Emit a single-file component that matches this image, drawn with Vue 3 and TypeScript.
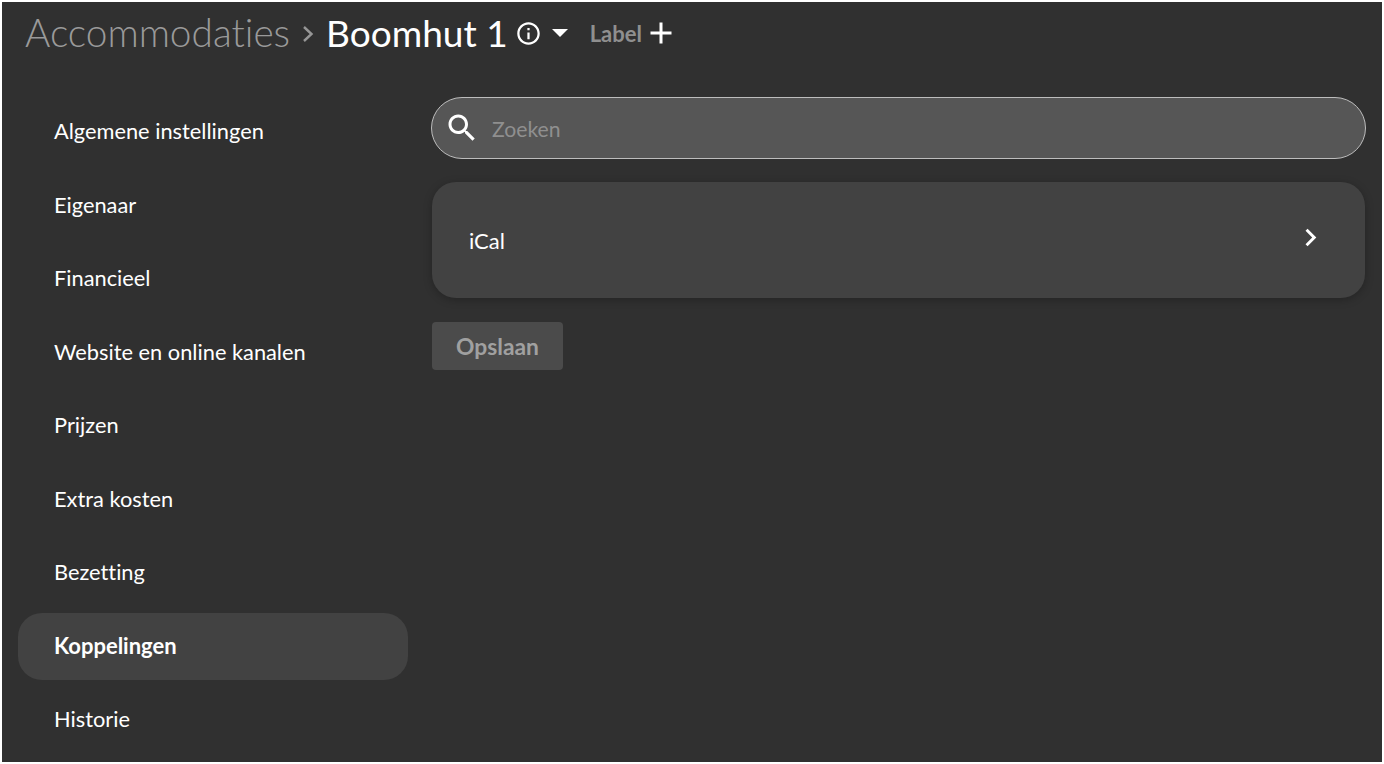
<script setup lang="ts">
const menuItems: string[] = [
  'Algemene instellingen',
  'Eigenaar',
  'Financieel',
  'Website en online kanalen',
  'Prijzen',
  'Extra kosten',
  'Bezetting',
  'Koppelingen',
  'Historie'
]

const activeItem = 'Koppelingen'
</script>

<template>
  <div class="page">
    <header class="top">
      <span class="crumb">Accommodaties</span>
      <svg class="crumb-sep" width="12" height="18" viewBox="0 0 12 18">
        <path d="M2 2 L9.500 9 L2 16" fill="none" stroke="#969696" stroke-width="2.400" />
      </svg>
      <span class="title">Boomhut 1</span>
      <svg class="info" width="27" height="27" viewBox="0 0 24 24">
        <path
          fill="#fff"
          d="M11 7h2v2h-2zm0 4h2v6h-2zm1-9C6.48 2 2 6.48 2 12s4.48 10 10 10 10-4.480 10-10S17.520 2 12 2zm0 18c-4.410 0-8-3.590-8-8s3.590-8 8-8 8 3.590 8 8-3.590 8-8 8z"
        />
      </svg>
      <svg class="caret" width="16" height="8" viewBox="0 0 16 8">
        <path fill="#fff" d="M0 0h16L8 8z" />
      </svg>
      <span class="label">Label</span>
      <svg class="plus" width="24" height="24" viewBox="0 0 24 24">
        <path fill="#fff" d="M22.500 13.500h-9v9h-3v-9h-9v-3h9v-9h3v9h9z" />
      </svg>
    </header>

    <div class="layout">
      <nav class="menu">
        <a
          v-for="item in menuItems"
          :key="item"
          class="menu-item"
          :class="{ active: item === activeItem }"
        >
          {{ item }}
        </a>
      </nav>

      <main class="content">
        <div class="search">
          <svg width="36" height="36" viewBox="0 0 24 24">
            <path
              fill="#fff"
              d="M15.500 14h-.790l-.280-.270C15.410 12.590 16 11.110 16 9.500 16 5.910 13.090 3 9.500 3S3 5.910 3 9.500 5.910 16 9.500 16c1.610 0 3.090-.590 4.230-1.570l.270.280v.790l5 4.990L20.490 19l-4.990-5zm-6 0C7.010 14 5 11.990 5 9.500S7.010 5 9.500 5 14 7.010 14 9.500 11.990 14 9.500 14z"
            />
          </svg>
          <span class="placeholder">Zoeken</span>
        </div>

        <div class="card">
          <span>iCal</span>
          <svg width="35" height="35" viewBox="0 0 24 24">
            <path fill="#fff" d="M10 6 8.590 7.410 13.170 12l-4.580 4.590L10 18l6-6z" />
          </svg>
        </div>

        <button class="save" disabled>Opslaan</button>
      </main>
    </div>
  </div>
</template>

<style scoped>
.page {
  height: 760px;
  overflow: hidden;
  margin: 2px 2px 0;
  background: #303030;
  font-family: Lato, "Open Sans", sans-serif;
  font-variant-ligatures: none;
  color: #fff;
}

.top {
  display: flex;
  align-items: center;
  height: 62px;
  padding-left: 23px;
}

.crumb {
  margin-bottom: 2px;
  font-size: 38.800px;
  font-weight: 300;
  color: #9a9a9a;
}

.crumb-sep {
  margin: 2px 12px 0 12px;
}

.title {
  margin-bottom: 2px;
  font-size: 37px;
  font-weight: 400;
}

.info {
  margin-left: 7px;
}

.caret {
  margin-left: 10px;
}

.label {
  margin-left: 22px;
  font-size: 22px;
  font-weight: 700;
  color: #8f8f8f;
}

.plus {
  margin-left: 7px;
}

.layout {
  display: grid;
  grid-template-columns: 390px 1fr;
  gap: 24px;
  padding: 33px 0 0 16px;
}

.menu {
  display: flex;
  flex-direction: column;
  gap: 6.500px;
  padding-top: 1px;
}

.menu-item {
  box-sizing: border-box;
  display: flex;
  align-items: center;
  height: 67px;
  padding: 0 0 2px 36px;
  border-radius: 24px;
  font-size: 21.800px;
}

.menu-item.active {
  background: #424242;
  font-weight: 700;
  font-size: 22px;
}

.content {
  display: flex;
  flex-direction: column;
  align-items: stretch;
  padding-right: 17px;
}

.search {
  box-sizing: border-box;
  display: flex;
  align-items: center;
  gap: 12px;
  height: 62px;
  margin: 0 -1px;
  padding-left: 12px;
  border: 1px solid #bdbdbd;
  border-radius: 31px;
  background: #565656;
}

.placeholder {
  margin-top: 1px;
  font-size: 21.200px;
  color: #8f8f8f;
}

.card {
  box-sizing: border-box;
  display: flex;
  align-items: center;
  justify-content: space-between;
  height: 116px;
  margin-top: 23px;
  padding: 0 37px 0 37px;
  border-radius: 24px;
  background: #424242;
  box-shadow: 0 2px 8px rgba(0, 0, 0, 0.25);
  font-size: 22px;
}

.card svg {
  margin-top: -6px;
}

.save {
  align-self: flex-start;
  width: 131px;
  height: 48px;
  margin-top: 24px;
  border: none;
  border-radius: 4px;
  background: #4b4b4b;
  color: #a0a0a0;
  font-family: inherit;
  font-size: 22.800px;
  font-weight: 700;
}
</style>

<style>
body {
  background: #fff;
}
</style>
